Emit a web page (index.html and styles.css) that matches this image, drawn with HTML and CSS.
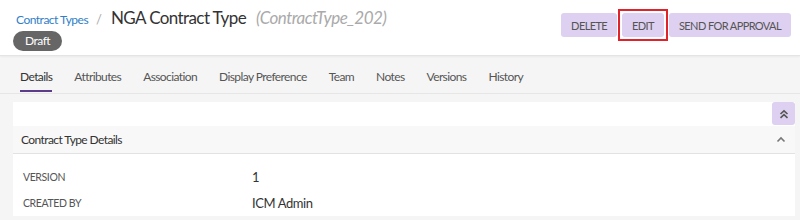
FILE: index.html
```html
<!DOCTYPE html>
<html>
<head>
<meta charset="utf-8">
<link rel="stylesheet" href="styles.css">
</head>
<body>
<header class="header">
  <div class="title-block">
    <div class="crumbs">
      <a class="crumb-link">Contract Types</a>
      <span class="crumb-sep">/</span>
      <span class="page-title">NGA Contract Type</span>
      <span class="page-code">(ContractType_202)</span>
    </div>
    <span class="status-pill">Draft</span>
  </div>
  <div class="actions">
    <button class="btn">DELETE</button>
    <span class="highlight"><button class="btn">EDIT</button></span>
    <button class="btn">SEND FOR APPROVAL</button>
  </div>
</header>
<nav class="tabs">
  <span class="tab active">Details</span>
  <span class="tab">Attributes</span>
  <span class="tab">Association</span>
  <span class="tab">Display Preference</span>
  <span class="tab">Team</span>
  <span class="tab">Notes</span>
  <span class="tab">Versions</span>
  <span class="tab">History</span>
</nav>
<main class="content">
  <section class="card">
    <div class="card-toolbar">
      <button class="collapse-all" aria-label="Collapse all">
        <svg width="10" height="10" viewBox="0 0 10 10"><path d="M1.5 5 L5 1.8 L8.5 5 M1.5 8.8 L5 5.6 L8.5 8.8" fill="none" stroke="#555" stroke-width="1.6"/></svg>
      </button>
    </div>
    <div class="section-head">
      <span>Contract Type Details</span>
      <svg width="10" height="7" viewBox="0 0 10 7"><path d="M1.5 5.5 L5 2 L8.5 5.5" fill="none" stroke="#777" stroke-width="1.6"/></svg>
    </div>
    <div class="fields">
      <div class="field"><span class="label">VERSION</span><span class="value">1</span></div>
      <div class="field"><span class="label">CREATED BY</span><span class="value">ICM Admin</span></div>
    </div>
  </section>
</main>
</body>
</html>
```
FILE: styles.css
```css
* { box-sizing: border-box; }
html, body { margin: 0; padding: 0; }
body {
  font-family: "Lato", "Noto Sans", sans-serif;
  background: #f5f5f5;
  color: #333;
  width: 800px;
  height: 220px;
  overflow: hidden;
}
.header {
  background: #fff;
  height: 56px;
  border-bottom: 1px solid #e4e4e4;
  box-shadow: 0 1px 2px rgba(0,0,0,0.05);
  display: flex;
  justify-content: space-between;
  padding: 0 9px 0 13px;
}
.title-block { display: flex; flex-direction: column; padding-top: 7px; }
.crumbs { display: flex; align-items: baseline; height: 24px; padding-left: 3px; }
.crumb-link { color: #2f80c8; font-size: 12px; letter-spacing: -0.5px; }
.crumb-sep { color: #aaa; font-size: 13px; margin: 0 9px 0 8px; }
.page-title { font-size: 17px; letter-spacing: -0.6px; color: #333; }
.page-code { font-size: 17px; letter-spacing: -0.5px; color: #aaa; font-style: italic; margin-left: 10px; }
.status-pill {
  align-self: flex-start;
  background: #666;
  color: #fff;
  font-size: 12px;
  letter-spacing: -0.5px;
  height: 20px;
  line-height: 20px;
  padding: 0 12px;
  border-radius: 10px;
}
.actions { display: flex; align-items: flex-start; padding-top: 13px; gap: 5px; }
.btn {
  font-family: inherit;
  border: none;
  background: #ddd0f0;
  color: #555;
  font-size: 11px;
  letter-spacing: -0.6px;
  height: 24px;
  padding: 0 10px;
  border-radius: 3px;
}
.highlight {
  display: flex;
  outline: 2px solid #e0222a;
  outline-offset: 2px;
}
.tabs {
  display: flex;
  gap: 22px;
  height: 38px;
  padding: 0 20px;
  border-bottom: 1px solid #e6e6e6;
}
.tab {
  font-size: 12px;
  letter-spacing: -0.6px;
  color: #555;
  height: 36px;
  padding-top: 13px;
  line-height: 16px;
  border-bottom: 2px solid transparent;
}
.tab.active { color: #333; border-bottom-color: #5b3d8c; }
.content { padding: 8px 5px 0 13px; }
.card { background: #fff; }
.card-toolbar { display: flex; justify-content: flex-end; height: 24px; }
.collapse-all {
  width: 23px; height: 23px;
  border: none;
  background: #ddd0f0;
  border-radius: 3px;
  display: flex; align-items: center; justify-content: center;
  padding: 0;
}
.section-head {
  background: #f8f8f8;
  border-bottom: 1px solid #e2e2e2;
  height: 28px;
  display: flex;
  align-items: center;
  justify-content: space-between;
  padding: 0 9px 0 8px;
  font-size: 12px;
  letter-spacing: -0.6px;
  color: #333;
}
.fields { padding: 10px 10px 0 10px; }
.field { display: flex; align-items: center; height: 26px; }
.label { width: 229px; font-size: 10.5px; letter-spacing: -0.4px; color: #555; }
.value { font-size: 13px; letter-spacing: -0.4px; color: #333; }
```
